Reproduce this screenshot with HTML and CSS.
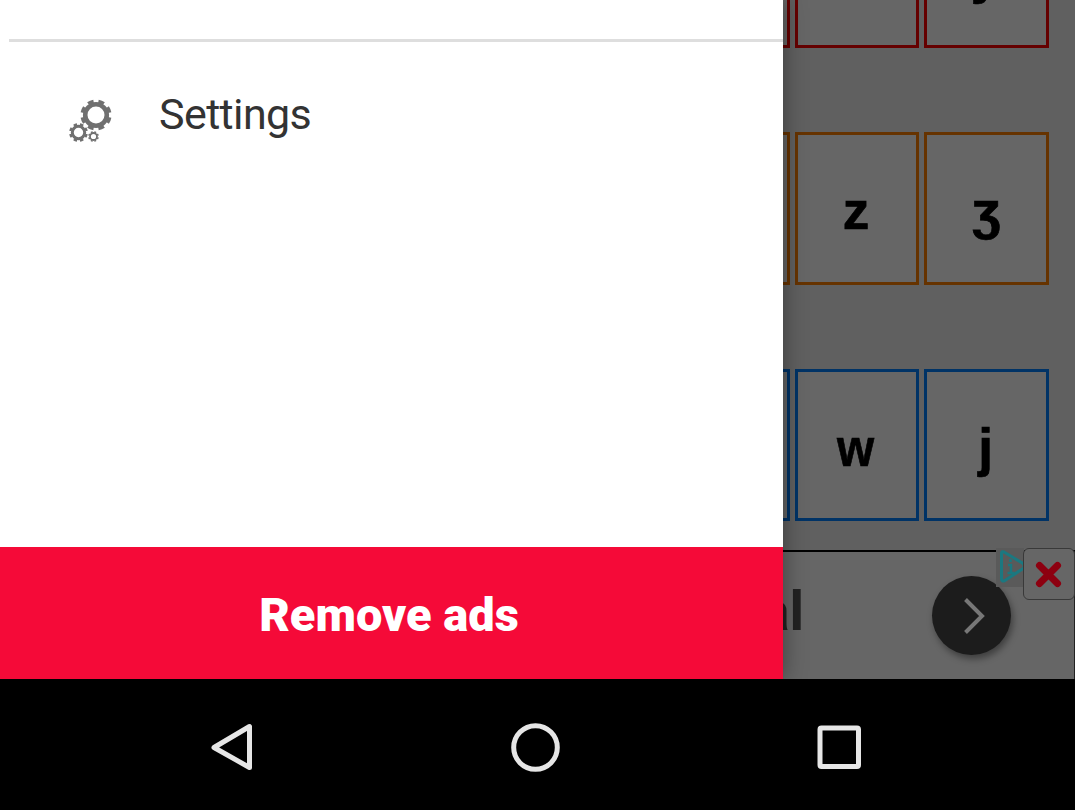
FILE: index.html
```html
<!DOCTYPE html>
<html lang="en">
<head>
<meta charset="utf-8">
<title>Settings</title>
<link rel="stylesheet" href="styles.css">
</head>
<body>
<div class="screen">
  <div class="stage">
    <main class="board">
      <div class="row red"><span class="cell"></span><span class="cell"></span><span class="cell"><b class="y">y</b></span></div>
      <div class="row orange"><span class="cell"></span><span class="cell"><b class="z">z</b></span><span class="cell"><b class="ezh">ʒ</b></span></div>
      <div class="row blue"><span class="cell"></span><span class="cell"><b class="w">w</b></span><span class="cell"><b class="j">j</b></span></div>
    </main>
    <section class="ad">
      <span class="ad-text">al</span>
      <span class="ad-go"><svg width="79" height="79" viewBox="0 0 79 79"><path d="M33.500 23.500 50 40 33.500 56.500" fill="none" stroke="#777" stroke-width="4"/></svg></span>
      <span class="ad-info"><svg width="28" height="38" viewBox="0 0 28 38"><path d="M5.500 5.500Q5.500 3 8 4L27 15.500Q29.500 18 27 20.500L9 32.500Q5.500 34 5.500 31Z" fill="none" stroke="#1b7880" stroke-width="3"/><path d="M14.500 11v3M12 17h3v8M11.500 25h7" fill="none" stroke="#1b7880" stroke-width="2.500"/></svg></span>
      <span class="ad-close"><svg width="51" height="51" viewBox="0 0 51 51"><path d="M15.500 16.500 33.500 34.500M33.500 16.500 15.500 34.500" stroke="#8d0010" stroke-width="7" stroke-linecap="round"/></svg></span>
    </section>
    <aside class="drawer">
      <div class="divider"></div>
      <a class="item">
        <svg class="gears" width="48" height="48" viewBox="0 0 48 48" fill="none" stroke="#707070">
          <circle cx="29" cy="18" r="10.800" stroke-width="4.600"/>
          <circle cx="29" cy="18" r="13.800" stroke-width="3.600" pathLength="80" stroke-dasharray="5.400 4.600" stroke-dashoffset="-2.300"/>
          <circle cx="11.500" cy="35.500" r="6.200" stroke-width="3"/>
          <circle cx="11.500" cy="35.500" r="8.200" stroke-width="2.400" pathLength="80" stroke-dasharray="5.400 4.600" stroke-dashoffset="-2.300"/>
          <circle cx="26.500" cy="39.500" r="3.500" stroke-width="1.800"/>
          <circle cx="26.500" cy="39.500" r="4.700" stroke-width="1.400" pathLength="80" stroke-dasharray="5.400 4.600" stroke-dashoffset="-2.300"/>
        </svg>
        <span class="label">Settings</span>
      </a>
      <button class="remove">Remove ads</button>
    </aside>
  </div>
  <nav class="navbar">
    <svg width="50" height="54" viewBox="0 0 50 54"><path d="M42.500 5.500V46.500L7 26.500Z" fill="none" stroke="#e6e6e6" stroke-width="5" stroke-linejoin="round"/></svg>
    <svg width="50" height="54" viewBox="0 0 50 54"><circle cx="24.500" cy="26.500" r="21.800" fill="none" stroke="#e6e6e6" stroke-width="5"/></svg>
    <svg width="50" height="54" viewBox="0 0 50 54"><rect x="5" y="7" width="38.500" height="38.500" rx="1.500" fill="none" stroke="#e6e6e6" stroke-width="5"/></svg>
  </nav>
</div>
</body>
</html>
```
FILE: styles.css
```css
* { box-sizing: border-box; }
body { margin: 0; background: #000; font-family: Roboto, sans-serif; }
.screen { width: 1075px; height: 810px; display: flex; flex-direction: column; overflow: hidden; }
.stage { position: relative; height: 679px; display: flex; flex-direction: column; overflow: hidden; background: #606060; }
.board { height: 550px; display: flex; flex-direction: column; justify-content: flex-end; gap: 84px; padding: 0 26px 29px 0; }
.row { display: flex; justify-content: flex-end; gap: 5px; flex: none; }
.cell { width: 124px; height: 152.5px; border: 3px solid; background: #666; display: flex; justify-content: center; align-items: center; }
.cell:last-child { width: 125px; }
.cell b { color: #000; font: 700 53px/60px "Liberation Sans", sans-serif; -webkit-text-stroke: .7px #000; }
.red .cell { border-color: #650000; }
.orange .cell { border-color: #663300; }
.blue .cell { border-color: #003366; }
.cell .z { transform: translate(-1px, 3px); }
.cell .y { transform: translate(-1px, 3px); }
.cell .w { transform: translate(-1px, 3px) scaleX(.9); }
.cell .j { transform: translate(-1px, 3px); }
.cell .ezh { transform: translateY(3px); }
.ad { position: relative; flex: 1; background: #666; border-top: 2px solid #000; border-right: 1px solid #222; }
.ad-text { position: absolute; right: 270px; top: 27px; font-weight: 700; font-size: 55px; line-height: 64px; color: #222; }
.ad-go { position: absolute; left: 932px; top: 24px; width: 79px; height: 79px; border-radius: 50%; background: #1c1c1c; box-shadow: 2px 4px 7px rgba(0,0,0,.4); }
.ad-info { position: absolute; left: 996px; top: -4px; width: 28px; height: 39px; background: #5a5a5a; }
.ad-close { position: absolute; left: 1023px; top: -4px; width: 52px; height: 52px; background: #666; border: 1px solid #393939; border-radius: 6px; }
.ad svg { display: block; }
.drawer { position: absolute; left: 0; top: 0; width: 783px; height: 679px; display: flex; flex-direction: column; background: #fff; box-shadow: 0 0 22px rgba(0,0,0,.4); }
.divider { height: 3px; margin: 39px 0 0 9px; background: #dedede; }
.item { display: flex; align-items: flex-start; padding: 55px 0 0 67px; }
.label { margin: -8px 0 0 44px; color: #333; font-size: 43px; line-height: 50px; letter-spacing: -.6px; }
.remove { width: 783px; height: 132px; margin: auto 0 0; padding: 4px 5px 0 0; border: 0; background: #f50a38; color: #fff; font: 900 47px/54px Roboto, sans-serif; }
.navbar { flex: 1; display: flex; padding: 42px 0 0 207px; gap: 254px; }
```
